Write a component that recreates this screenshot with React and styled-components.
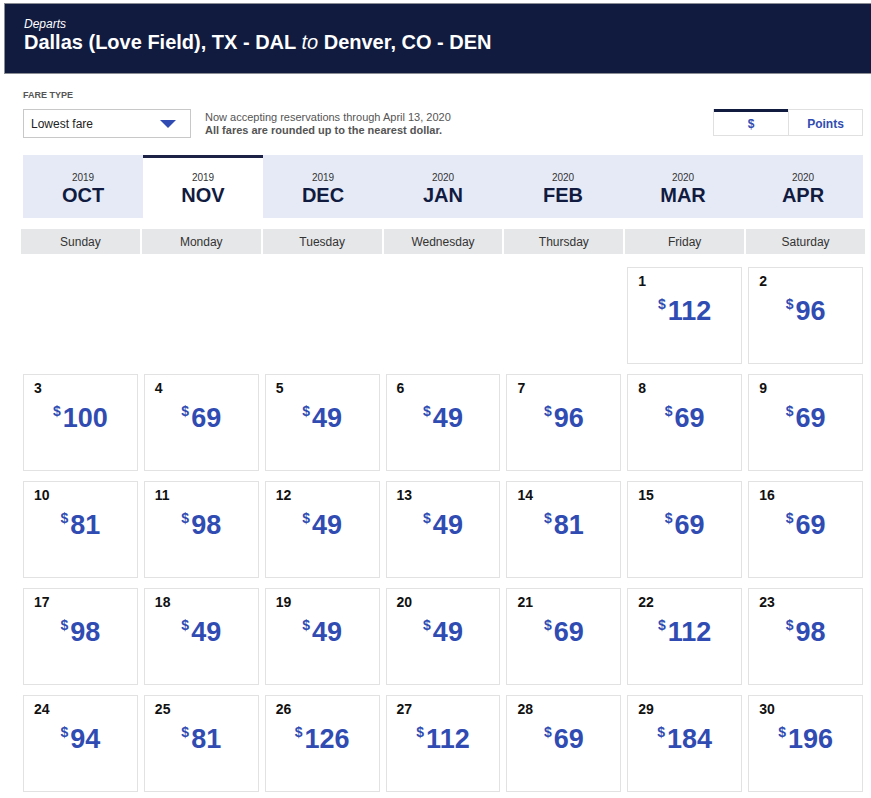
import styled, { createGlobalStyle } from "styled-components";

const GlobalStyle = createGlobalStyle`
  body {
    margin: 0;
    font-family: "Liberation Sans", Arial, sans-serif;
    background: #fff;
    color: #111;
  }
`;

const months = [
  { year: "2019", name: "OCT" },
  { year: "2019", name: "NOV", active: true },
  { year: "2019", name: "DEC" },
  { year: "2020", name: "JAN" },
  { year: "2020", name: "FEB" },
  { year: "2020", name: "MAR" },
  { year: "2020", name: "APR" },
];

const weekdays = ["Sunday", "Monday", "Tuesday", "Wednesday", "Thursday", "Friday", "Saturday"];

const prices = [
  112, 96, 100, 69, 49, 49, 96, 69, 69, 81, 98, 49, 49, 81, 69, 69, 98, 49, 49, 49,
  69, 112, 98, 94, 81, 126, 112, 69, 184, 196,
];

// Nov 1 2019 is a Friday
const firstOffset = 5;

function App() {
  return (
    <>
      <GlobalStyle />
      <Header>
        <Departs>Departs</Departs>
        <Route>
          Dallas (Love Field), TX - DAL <To>to</To> Denver, CO - DEN
        </Route>
      </Header>
      <Main>
        <FareLabel>Fare type</FareLabel>
        <Controls>
          <Select>
            <span>Lowest fare</span>
            <Caret />
          </Select>
          <Note>
            Now accepting reservations through April 13, 2020
            <strong>All fares are rounded up to the nearest dollar.</strong>
          </Note>
          <Toggle>
            <ToggleItem $active>$</ToggleItem>
            <ToggleItem>Points</ToggleItem>
          </Toggle>
        </Controls>
        <Tabs>
          {months.map((m) => (
            <Tab key={m.name} $active={m.active}>
              <Year>{m.year}</Year>
              <MonthName>{m.name}</MonthName>
            </Tab>
          ))}
        </Tabs>
        <Weekdays>
          {weekdays.map((d) => (
            <Weekday key={d}>{d}</Weekday>
          ))}
        </Weekdays>
        <Days>
          {prices.map((p, i) => (
            <Day key={i} style={i === 0 ? { gridColumnStart: firstOffset + 1 } : undefined}>
              <DayNum>{i + 1}</DayNum>
              <Price>
                <Dollar>$</Dollar>
                {p}
              </Price>
            </Day>
          ))}
        </Days>
      </Main>
    </>
  );
}

const Header = styled.header`
  margin: 3px 0 0 4px;
  height: 71px;
  background: #111b40;
  border: 1px solid #8a8d94;
  border-right: none;
  padding: 13px 0 0 19px;
  box-sizing: border-box;
  color: #fff;
`;

const Departs = styled.div`
  font-size: 12px;
  font-style: italic;
  line-height: 14px;
`;

const Route = styled.div`
  font-size: 20px;
  font-weight: bold;
  line-height: 24px;
  margin-top: -1px;
`;

const To = styled.em`
  font-weight: normal;
`;

const Main = styled.main`
  padding: 16px 8px 0 23px;
  width: 840px;
`;

const FareLabel = styled.div`
  font-size: 9px;
  font-weight: bold;
  text-transform: uppercase;
  color: #555;
  line-height: 11px;
`;

const Controls = styled.div`
  display: flex;
  align-items: center;
  margin-top: 8px;
`;

const Select = styled.div`
  width: 168px;
  height: 29px;
  box-sizing: border-box;
  border: 1px solid #c8c8c8;
  display: flex;
  align-items: center;
  justify-content: space-between;
  padding: 0 14px 0 7px;
  font-size: 12px;
  color: #222;
`;

const Caret = styled.span`
  width: 0;
  height: 0;
  border-left: 8px solid transparent;
  border-right: 8px solid transparent;
  border-top: 8px solid #304cb2;
  margin-top: 1px;
`;

const Note = styled.div`
  margin-left: 14px;
  font-size: 11px;
  line-height: 13px;
  color: #555;
  display: flex;
  flex-direction: column;
  flex: 1;
`;

const Toggle = styled.div`
  display: flex;
  border: 1px solid #e0e0e0;
  margin-bottom: 2px;
`;

const ToggleItem = styled.div`
  width: 74px;
  height: 26px;
  box-sizing: border-box;
  display: flex;
  align-items: center;
  justify-content: center;
  font-size: 12px;
  font-weight: bold;
  color: #304cb2;
  border-top: 3px solid ${({ $active }) => ($active ? "#111b40" : "transparent")};
  margin-top: -1px;
  & + & {
    border-left: 1px solid #e0e0e0;
  }
`;

const Tabs = styled.div`
  display: grid;
  grid-template-columns: repeat(7, 1fr);
  margin-top: 17px;
  background: #e6eaf6;
`;

const Tab = styled.div`
  height: 63px;
  box-sizing: border-box;
  display: flex;
  flex-direction: column;
  align-items: center;
  padding-top: 14px;
  color: #111b40;
  background: ${({ $active }) => ($active ? "#fff" : "transparent")};
  border-top: 3px solid ${({ $active }) => ($active ? "#1b2245" : "transparent")};
`;

const Year = styled.div`
  font-size: 10px;
  line-height: 12px;
  color: #333;
`;

const MonthName = styled.div`
  font-size: 20px;
  font-weight: bold;
  line-height: 22px;
`;

const Weekdays = styled.div`
  display: grid;
  grid-template-columns: repeat(7, 1fr);
  gap: 2px;
  margin: 11px -2px 0 -2px;
`;

const Weekday = styled.div`
  background: #e6e7e8;
  height: 25px;
  display: flex;
  align-items: center;
  justify-content: center;
  font-size: 12px;
  color: #333;
`;

const Days = styled.div`
  display: grid;
  grid-template-columns: repeat(7, 1fr);
  grid-auto-rows: 97px;
  column-gap: 6px;
  row-gap: 10px;
  margin-top: 13px;
`;

const Day = styled.div`
  border: 1px solid #e2e2e2;
  box-sizing: border-box;
  padding: 5px 0 0 10px;
`;

const DayNum = styled.div`
  font-size: 14px;
  font-weight: bold;
  color: #111;
  line-height: 16px;
`;

const Price = styled.div`
  margin-left: -10px;
  text-align: center;
  font-size: 27px;
  font-weight: bold;
  color: #304cb2;
  line-height: 30px;
  margin-top: 7px;
`;

const Dollar = styled.span`
  font-size: 14px;
  vertical-align: top;
  line-height: 16px;
  margin-right: 2px;
`;

export default App;
